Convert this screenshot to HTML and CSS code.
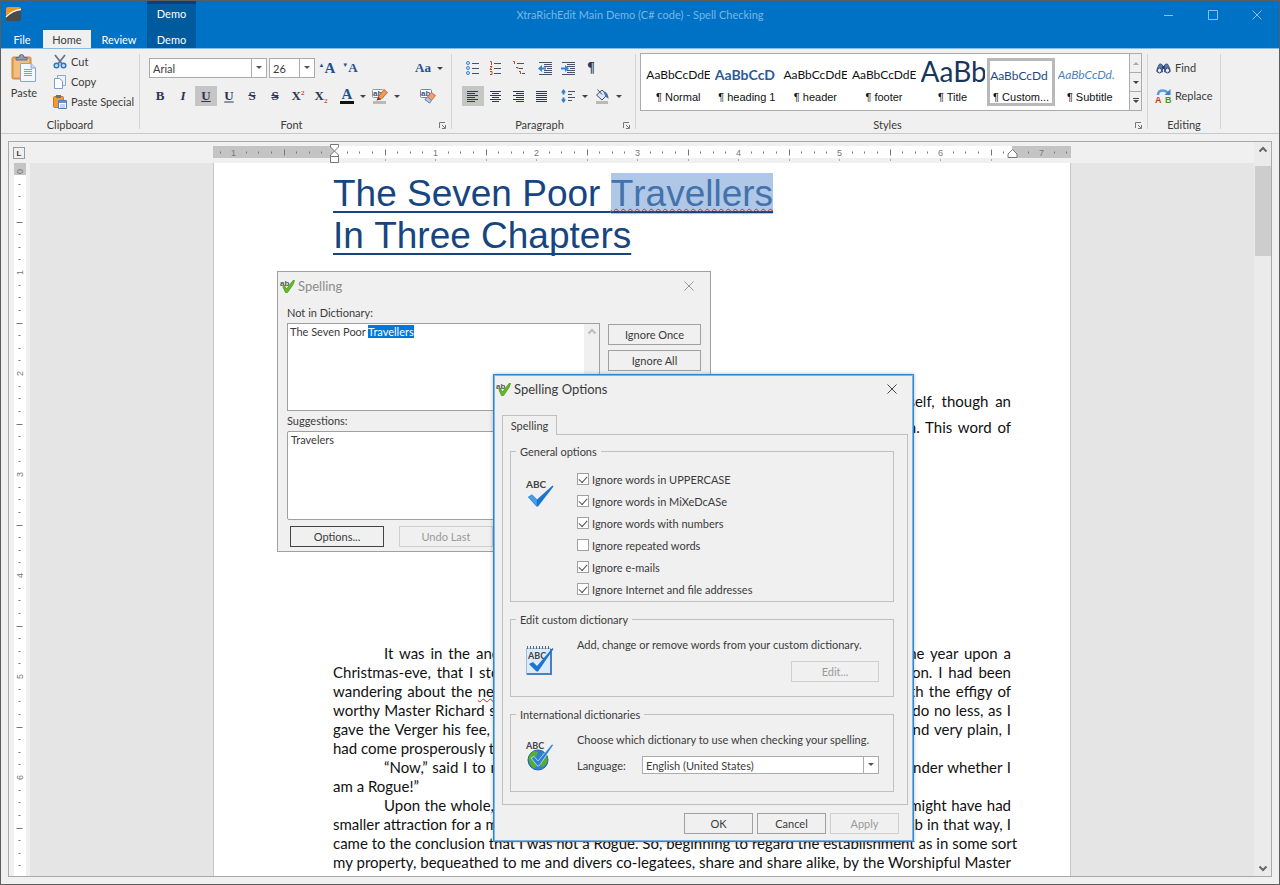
FILE: index.html
```html
<!doctype html>
<html lang="en">
<head>
    <meta charset="UTF-8">
    <meta name="viewport" content="width=device-width, initial-scale=1.0">
    <title>XtraRichEdit Main Demo (C# code) - Spell Checking</title>
    <link rel="stylesheet" href="styles.css">
</head>
<body>
<div class="app">
    <!--title bar-->
    <header class="header">
        <div class="titlebar">
            <div class="title-left">
                <svg class="logo" width="15" height="14" viewBox="0 0 15 14">
                    <rect width="15" height="14" rx="2" fill="#4a4a4a"/>
                    <path d="M0 9V2Q0 0 2 0H13Q15 0 15 2Q6 3 0 9Z" fill="#f7941e"/>
                    <path d="M0 10Q6 3.500 15 2.500" fill="none" stroke="#fff" stroke-width="1.300"/>
                </svg>
                <span class="context">Demo</span>
            </div>
            <h1 class="title">XtraRichEdit Main Demo (C# code) - Spell Checking</h1>
            <div class="win-btns">
                <button aria-label="Minimize"><svg width="10" height="10"><path d="M0 5.500H9"/></svg></button>
                <button aria-label="Maximize"><svg width="10" height="10"><path d="M.5.500H9.500V9.500H.5Z"/></svg></button>
                <button aria-label="Close"><svg width="10" height="10"><path d="M.5.500L9.500 9.500M9.500.500L.5 9.500"/></svg></button>
            </div>
        </div>
        <nav class="tabs">
            <a class="tab-file" href="#">File</a>
            <a class="tab-home on" href="#">Home</a>
            <a class="tab-review" href="#">Review</a>
            <a class="tab-demo" href="#">Demo</a>
        </nav>
    </header>

    <!--ribbon-->
    <div class="ribbon">
        <section class="group clipboard">
            <div class="group-body">
                <button class="paste">
                    <svg width="26" height="28" viewBox="0 0 26 28">
                        <rect x="1" y="3" width="19" height="22" rx="1.500" fill="#e8a55c" stroke="#c98341"/>
                        <path d="M3 5H18V23H3Z" fill="#f3bf80"/>
                        <path d="M5 6V3.500H8Q8 .5 10.500.5T13 3.500H16V6Z" fill="#8d9bb5" stroke="#5d6d8c"/>
                        <path d="M9.500 9.500H20L24.500 14V27.500H9.500Z" fill="#f4f8fe" stroke="#8ba3cc"/>
                        <path d="M20 9.500V14H24.500" fill="#cfdcf1" stroke="#8ba3cc"/>
                        <path d="M13 15.500H21M13 17.500H21M13 19.500H21M13 21.500H21" stroke="#7d9dd0"/>
                    </svg>
                    <span>Paste</span>
                </button>
                <div class="stack">
                    <button class="cmd">
                        <svg width="14" height="14" viewBox="0 0 14 14">
                            <path d="M2 0L9.500 9.500M12 0L4.500 9.500" stroke="#64748c" stroke-width="1.800"/>
                            <circle cx="3.500" cy="10.500" r="2.300" fill="#bfe0f8" stroke="#2f77be" stroke-width="1.500"/>
                            <circle cx="10.500" cy="10.500" r="2.300" fill="#bfe0f8" stroke="#2f77be" stroke-width="1.500"/>
                        </svg>Cut</button>
                    <button class="cmd">
                        <svg width="14" height="14" viewBox="0 0 14 14">
                            <path d="M4.500.5H12.500V10.500H4.500Z" fill="#eef4fd" stroke="#8fa8d0"/>
                            <path d="M1.500 3.500H6.500L9.500 6V13.500H1.500Z" fill="#fff" stroke="#7f9bc9"/>
                        </svg>Copy</button>
                    <button class="cmd">
                        <svg width="14" height="14" viewBox="0 0 14 14">
                            <rect x=".5" y="1.500" width="10" height="11" rx="1" fill="#f09a3e" stroke="#cc7526"/>
                            <rect x="3" y="0" width="5" height="3" fill="#63718b"/>
                            <path d="M5.500 5.500H13.500V13.500H5.500Z" fill="#fff" stroke="#4f7ec0"/>
                            <path d="M6 6H13V8H6Z" fill="#5d93d6"/>
                            <path d="M7 10H12M7 12H12" stroke="#8aabdb"/>
                        </svg>Paste Special</button>
                </div>
            </div>
            <h2>Clipboard</h2>
        </section>

        <section class="group font has-launch">
            <div class="group-body rows">
                <div class="row">
                    <span class="combo combo-font"><select aria-label="Font name"><option>Arial</option></select></span>
                    <span class="combo combo-size"><select aria-label="Font size"><option>26</option></select></span>
                    <button class="tool letter big" aria-label="Grow font"><sup>▲</sup>A</button>
                    <button class="tool letter shrink" aria-label="Shrink font"><sup>▼</sup>A</button>
                    <button class="tool letter blue push" aria-label="Change case">Aa</button><i class="drop"></i>
                </div>
                <div class="row">
                    <button class="tool letter">B</button>
                    <button class="tool letter italic">I</button>
                    <button class="tool letter under on">U</button>
                    <button class="tool letter double">U</button>
                    <button class="tool letter strike">S</button>
                    <button class="tool letter strike2">S</button>
                    <button class="tool letter">X<sup class="red">2</sup></button>
                    <button class="tool letter">X<sub class="red">2</sub></button>
                    <button class="tool letter color" aria-label="Font color">A</button><i class="drop"></i>
                    <button class="tool" aria-label="Highlight">
                        <svg width="16" height="15" viewBox="0 0 16 15">
                            <rect x=".5" y=".5" width="11" height="8" rx="1" fill="#fff" stroke="#8496ba"/>
                            <text class="ab" x="1" y="7">ab</text>
                            <path d="M6 8L12 0.500L15.500 3.500L9 10.500Z" fill="#ef9a52" stroke="#b85b24" stroke-width=".8"/>
                            <path d="M6 8L9 10.500L4.500 11.500Z" fill="#7a2f1c"/>
                            <rect x="1" y="12" width="13" height="3" fill="#b9b9b9"/>
                        </svg>
                    </button><i class="drop"></i>
                    <button class="tool push-sm" aria-label="Clear formatting">
                        <svg width="16" height="15" viewBox="0 0 16 15">
                            <rect x=".5" y=".5" width="11" height="8" rx="1" fill="#fff" stroke="#6d84b4"/>
                            <text class="ab" x="1" y="7">ab</text>
                            <path d="M5 10.500L11.500 3.500L15.500 6.500L9.500 14Z" fill="#ef9d6b" stroke="#c06030" stroke-width=".8"/>
                            <path d="M5 10.500L7.500 8L11.500 11.500L9.500 14Z" fill="#aecbf2" stroke="#5c80bd" stroke-width=".8"/>
                        </svg>
                    </button>
                </div>
            </div>
            <h2>Font</h2>
            <button class="launch" aria-label="Font settings"><svg width="7" height="7"><path d="M.5 6V.5H6M3 3L6 6M6.500 3V6.500H3"/></svg></button>
        </section>

        <section class="group paragraph has-launch">
            <div class="group-body rows">
                <div class="row">
                    <button class="tool" aria-label="Bullets">
                        <svg width="14" height="14" viewBox="0 0 14 14"><g fill="#cfe7fb" stroke="#3d85c8"><circle cx="2" cy="2" r="1.500"/><circle cx="2" cy="7" r="1.500"/><circle cx="2" cy="12" r="1.500"/></g><path d="M6 2.500H13M6 7.500H13M6 12.500H13" stroke="#44546e"/></svg>
                    </button>
                    <button class="tool" aria-label="Numbering">
                        <svg width="14" height="14" viewBox="0 0 14 14"><path d="M1 .5H2.500V4M1 5.500H3L1 8.500H3M1 10.500H3V13.500H1" fill="none" stroke="#c0492b"/><path d="M5 2.500H12M5 7.500H12M5 12.500H12" stroke="#44546e"/></svg>
                    </button>
                    <button class="tool" aria-label="Multilevel list">
                        <svg width="14" height="14" viewBox="0 0 14 14"><path d="M1 .5H2.500V3M4 6.500H6V8M7 10.500H8.500V13" fill="none" stroke="#c0492b"/><path d="M5 2.500H12M7 7.500H11M10 12.500H13" stroke="#44546e"/></svg>
                    </button>
                    <button class="tool gap" aria-label="Decrease indent">
                        <svg width="14" height="13" viewBox="0 0 14 13"><path d="M1 .5H14M6 2.500H14M6 4.500H14M9 6.500H14M6 8.500H14M6 10.500H14M1 12.500H14" stroke="#44546e"/><path d="M0 6.500L4 3V5.500H8V7.500H4V10Z" fill="#2f86d6"/></svg>
                    </button>
                    <button class="tool" aria-label="Increase indent">
                        <svg width="14" height="13" viewBox="0 0 14 13"><path d="M1 .5H14M6 2.500H14M6 4.500H14M9 6.500H14M6 8.500H14M6 10.500H14M1 12.500H14" stroke="#44546e"/><path d="M8 6.500L4 3V5.500H0V7.500H4V10Z" fill="#2f86d6"/></svg>
                    </button>
                    <button class="tool letter pilcrow" aria-label="Show marks">¶</button>
                </div>
                <div class="row">
                    <button class="tool on" aria-label="Align left"><svg width="12" height="11"><path d="M0 .5H11M0 2.500H8M0 4.500H11M0 6.500H8M0 8.500H11M0 10.500H8" stroke="#30394a"/></svg></button>
                    <button class="tool" aria-label="Center"><svg width="12" height="11"><path d="M0 .5H11M2 2.500H9M0 4.500H11M2 6.500H9M0 8.500H11M2 10.500H9" stroke="#30394a"/></svg></button>
                    <button class="tool" aria-label="Align right"><svg width="12" height="11"><path d="M0 .5H11M3 2.500H11M0 4.500H11M3 6.500H11M0 8.500H11M3 10.500H11" stroke="#30394a"/></svg></button>
                    <button class="tool" aria-label="Justify"><svg width="12" height="11"><path d="M0 .5H11M0 2.500H11M0 4.500H11M0 6.500H11M0 8.500H11M0 10.500H11" stroke="#30394a"/></svg></button>
                    <button class="tool gap" aria-label="Line spacing">
                        <svg width="14" height="14" viewBox="0 0 14 14"><path d="M2.500 0L5 3.500H3.500V5.500H1.500V3.500H0ZM2.500 14L5 10.500H3.500V8.500H1.500V10.500H0Z" fill="#2f78c4"/><path d="M7 2.500H14M7 5.500H11M7 8.500H14M7 11.500H11" stroke="#44546e"/></svg>
                    </button><i class="drop"></i>
                    <button class="tool" aria-label="Shading">
                        <svg width="15" height="15" viewBox="0 0 15 15"><path d="M1.500 6L7 1L12 6L7 11Z" fill="#dfe6f2" stroke="#42506a"/><path d="M2.500.5L7 5.500" stroke="#42506a"/><path d="M8 2Q13.500 3 13.500 10L10.500 7.500Z" fill="#3f6fb5"/><rect x="1" y="12" width="12" height="3" fill="#b9b9b9"/></svg>
                    </button><i class="drop"></i>
                </div>
            </div>
            <h2>Paragraph</h2>
            <button class="launch" aria-label="Paragraph settings"><svg width="7" height="7"><path d="M.5 6V.5H6M3 3L6 6M6.500 3V6.500H3"/></svg></button>
        </section>

        <section class="group styles has-launch">
            <div class="group-body">
                <div class="gallery">
                    <button class="style"><span class="sample">AaBbCcDdE</span><span>¶ Normal</span></button>
                    <button class="style"><span class="sample s-heading">AaBbCcD</span><span>¶ heading 1</span></button>
                    <button class="style"><span class="sample">AaBbCcDdE</span><span>¶ header</span></button>
                    <button class="style"><span class="sample">AaBbCcDdE</span><span>¶ footer</span></button>
                    <button class="style"><span class="sample s-title">AaBb</span><span>¶ Title</span></button>
                    <button class="style on"><span class="sample s-custom">AaBbCcDd</span><span>¶ Custom...</span></button>
                    <button class="style"><span class="sample s-subtitle">AaBbCcDd.</span><span>¶ Subtitle</span></button>
                </div>
                <div class="gallery-nav">
                    <button aria-label="Previous styles" disabled><i class="tri up"></i></button>
                    <button aria-label="Next styles"><i class="tri"></i></button>
                    <button aria-label="All styles"><i class="tri more"></i></button>
                </div>
            </div>
            <h2>Styles</h2>
            <button class="launch" aria-label="Style settings"><svg width="7" height="7"><path d="M.5 6V.5H6M3 3L6 6M6.500 3V6.500H3"/></svg></button>
        </section>

        <section class="group editing">
            <div class="group-body stack">
                <button class="cmd">
                    <svg width="15" height="11" viewBox="0 0 15 11">
                        <path d="M3.500 1Q5 .5 6.500 2V9H1Q0 7 3.500 1ZM11.500 1Q10 .5 8.500 2V9H14Q15 7 11.500 1Z" fill="#5d7cae" stroke="#2c4470" stroke-width=".8"/>
                        <ellipse cx="3.500" cy="7.500" rx="2" ry="2.500" fill="#e6effb" stroke="#2c4470"/>
                        <ellipse cx="11.500" cy="7.500" rx="2" ry="2.500" fill="#e6effb" stroke="#2c4470"/>
                        <rect x="6" y="3" width="3" height="3" fill="#2c4470"/>
                    </svg>Find</button>
                <button class="cmd">
                    <svg width="15" height="14" viewBox="0 0 15 14">
                        <path d="M2 6Q2 1.500 7 1.500Q10 1.500 11.500 3.500" fill="none" stroke="#5e9bd6" stroke-width="2.500"/>
                        <path d="M14.500 0V6H8.500Z" fill="#3c82c8"/>
                        <text x="-1" y="14" class="rep" fill="#c23a1a">A</text>
                        <text x="9" y="14" class="rep" fill="#4a9a1c">B</text>
                    </svg>Replace</button>
            </div>
            <h2>Editing</h2>
        </section>
    </div>

    <!--editor-->
    <main class="editor">
        <div class="corner"><button aria-label="Tab stop">L</button></div>
        <div class="hruler"><svg id="hruler" width="858" height="21"></svg></div>
        <div class="vruler"><svg id="vruler" width="12" height="714"></svg></div>
        <div class="view">
            <article class="page">
                <h3>The Seven Poor <mark>Travellers</mark><br>In Three Chapters</h3>
                <div class="intro">
                    <p>Strictly speaking, there were only six Poor Travellers; but being such a Traveller myself, though an</p>
                    <p>idle one, and being withal as poor as I hope to be, I brought the number up to seven. This word of</p>
                </div>
                <div class="story">
                    <p class="indent">It was in the ancient little city of Rochester in Kent, of all the good days in the year upon a</p>
                    <p>Christmas-eve, that I stood reading this inscription over the quaint old door in question. I had been</p>
                    <p>wandering about the <span class="typo">neighbouring</span> Cathedral, and seen the tomb of Richard Watts, with the effigy of</p>
                    <p>worthy Master Richard starting out of it like a ship’s figure-head; and I felt that I could do no less, as I</p>
                    <p>gave the Verger his fee, than inquire the way to Watts’s Charity. The way being short and very plain, I</p>
                    <p class="end">had come prosperously to the inscription and the quaint old door.</p>
                    <p class="indent">“Now,” said I to myself, as I looked at the door, “I know I am not a Proctor; I wonder whether I</p>
                    <p class="end">am a Rogue!”</p>
                    <p class="indent">Upon the whole, though Conscience produced two or three pretty faces which might have had</p>
                    <p>smaller attraction for a moral Goliath than they had had for me, who am but a Tom Thumb in that way, I</p>
                    <p>came to the conclusion that I was not a Rogue. So, beginning to regard the establishment as in some sort</p>
                    <p>my property, bequeathed to me and divers co-legatees, share and share alike, by the Worshipful Master</p>
                    <p class="end">Richard Watts, I stepped backward into the road to survey my inheritance.</p>
                </div>
            </article>
        </div>
        <div class="scroll">
            <svg width="8" height="5"><path d="M.5 4.500L4 1L7.500 4.500"/></svg>
            <div class="thumb"></div>
            <svg width="8" height="5"><path d="M.5.500L4 4L7.500.5"/></svg>
        </div>
    </main>

    <!--spelling dialog-->
    <div class="dialog spelling" role="dialog" aria-label="Spelling">
        <div class="caption">
            <svg width="14" height="14" viewBox="0 0 14 14"><use href="#spell"/></svg>
            <h2>Spelling</h2>
            <button class="close" aria-label="Close"><svg width="10" height="10"><path d="M.5.500L9.500 9.500M9.500.500L.5 9.500"/></svg></button>
        </div>
        <div class="spelling-body">
            <div class="fields">
                <label for="word">Not in Dictionary:</label>
                <div class="textbox">
                    <textarea id="word" spellcheck="false">The Seven Poor Travellers</textarea>
                    <div class="mini-scroll"><svg width="8" height="5"><path d="M.5 4.500L4 1L7.500 4.500"/></svg></div>
                </div>
                <label for="suggest">Suggestions:</label>
                <select id="suggest" size="6"><option>Travelers</option></select>
            </div>
            <div class="side">
                <button class="btn">Ignore Once</button>
                <button class="btn">Ignore All</button>
            </div>
        </div>
        <div class="spelling-foot">
            <button class="btn focus">Options...</button>
            <button class="btn" disabled>Undo Last</button>
        </div>
    </div>

    <!--options dialog-->
    <div class="dialog options" role="dialog" aria-label="Spelling Options">
        <div class="caption">
            <svg width="14" height="14" viewBox="0 0 14 14">
                <g id="spell">
                    <text x="-1" y="7" class="spell-ab">ab</text>
                    <path d="M3 6L5.500 10L12 1.500H13.500L12 5.500L6.500 13.500H4.500L2 8Z" fill="#62bb22" stroke="#4a9a12" stroke-width=".8"/>
                </g>
            </svg>
            <h2>Spelling Options</h2>
            <button class="close" aria-label="Close"><svg width="10" height="10"><path d="M.5.500L9.500 9.500M9.500.500L.5 9.500"/></svg></button>
        </div>
        <div class="tabstrip"><button role="tab">Spelling</button></div>
        <div class="panel">
            <fieldset class="general">
                <legend>General options</legend>
                <svg width="32" height="32" viewBox="0 0 32 32">
                    <text x="1" y="11" class="abc">ABC</text>
                    <path d="M3 20L7 17.500L12 22.500L27.500 8.500L28.500 9.500L13 29.500H11.500Z" fill="#1d74cf"/>
                    <path d="M3 20L7 17.500L12 22.500L11.500 29.500Z" fill="#4a9be6"/>
                </svg>
                <div class="checks">
                    <label><input type="checkbox" checked>Ignore words in UPPERCASE</label>
                    <label><input type="checkbox" checked>Ignore words in MiXeDcASe</label>
                    <label><input type="checkbox" checked>Ignore words with numbers</label>
                    <label><input type="checkbox">Ignore repeated words</label>
                    <label><input type="checkbox" checked>Ignore e-mails</label>
                    <label><input type="checkbox" checked>Ignore Internet and file addresses</label>
                </div>
            </fieldset>
            <fieldset class="custom">
                <legend>Edit custom dictionary</legend>
                <svg width="32" height="32" viewBox="0 0 32 32">
                    <rect x="1.500" y="3.500" width="24" height="26" fill="#dcebfb" stroke="#9dbce0"/>
                    <path d="M2 29H26V4" fill="none" stroke="#4d7fbc" stroke-width="2"/>
                    <path d="M2 2.500H25" stroke="#5b6676" stroke-width="3" stroke-dasharray="1 2"/>
                    <text x="3" y="14" class="abc small">ABC</text>
                    <path d="M4 19L8 17L12 21L27.500 3L28.500 4L13 26.500H11.500Z" fill="#1d74cf"/>
                </svg>
                <div class="fs-col">
                    <p>Add, change or remove words from your custom dictionary.</p>
                    <button class="btn" disabled>Edit...</button>
                </div>
            </fieldset>
            <fieldset class="intl">
                <legend>International dictionaries</legend>
                <svg width="32" height="32" viewBox="0 0 32 32">
                    <text x="1" y="9" class="abc small">ABC</text>
                    <circle cx="13" cy="20" r="10" fill="#2f7fd2" stroke="#2763a8"/>
                    <path d="M4 16Q8 9 13 12Q12 17 8 18Q8 22 12 23Q12 28 8 28Q3 23 4 16ZM17 13Q22 14 22.500 21Q20 27 16 27Q15 21 19 19Z" fill="#56b030"/>
                    <path d="M6 18L9 16.500L13 21L27 4L28.500 5L14 26H12.500Z" fill="#2a80da" stroke="#fff" stroke-width=".6"/>
                </svg>
                <div class="fs-col">
                    <p>Choose which dictionary to use when checking your spelling.</p>
                    <div class="lang">
                        <label for="lang">Language:</label>
                        <span class="combo"><select id="lang"><option>English (United States)</option></select></span>
                    </div>
                </div>
            </fieldset>
        </div>
        <div class="options-foot">
            <button class="btn">OK</button>
            <button class="btn">Cancel</button>
            <button class="btn" disabled>Apply</button>
        </div>
    </div>
</div>
<script>
    var INCH = 101; //pixels per inch

    //one mark of a ruler: a number, a half-inch tick or an eighth tick
    function mark(n, x, y, vertical){
        if(n % 8 === 0){
            var turn = vertical ? ' transform="rotate(-90 ' + x + ' ' + y + ')"' : '';
            return '<text x="' + x + '" y="' + (y + 3) + '"' + turn + '>' + Math.abs(n / 8) + '</text>';
        }
        var len = n % 4 === 0 ? 3 : 1;
        return vertical
            ? '<path d="M' + (x - len) + ' ' + y + 'H' + (x + len) + '"/>'
            : '<path d="M' + x + ' ' + (y - len) + 'V' + (y + len) + '"/>';
    }

    //horizontal ruler
    var h = '<rect class="out" y="4" width="858" height="12"/><rect class="in" x="121" y="4" width="678" height="12"/>';
    for(var i = -9; i <= 58; i++){
        var x = Math.round(121 + i * INCH / 8) + 0.5;
        if(i !== 0 && i !== 54){
            h += mark(i, x, 10.5, false);
        }
        if(i > 0 && i < 54 && i % 4 === 0){
            h += '<path class="pale" d="M' + x + ' 17V19"/>';
        }
    }
    h += '<path class="knob" d="M117.500 2.500H125.500V5L121.500 9L117.500 5ZM121.500 9L125.500 13V20.500H117.500V13ZM117.500 14.500H125.500"/>';
    h += '<path class="knob" d="M799.500 7.500L804 12V15.500H795V12Z"/>';
    document.getElementById('hruler').innerHTML = h;

    //vertical ruler
    var v = '<rect class="in" width="12" height="714"/><rect class="out" width="12" height="12"/>';
    for(var j = 0; j <= 55; j++){
        v += mark(j, 5.5, Math.round(8 + j * INCH / 8) + 0.5, true);
    }
    document.getElementById('vruler').innerHTML = v;

    //select the misspelled word
    var word = document.getElementById('word');
    word.focus();
    word.setSelectionRange(15, 25);
</script>
</body>
</html>
```
FILE: styles.css
```css
*{
    box-sizing: border-box;
    margin: 0;
    padding: 0;
}
body,button,select,textarea{
    font-family: Lato, "Open Sans", sans-serif;
    font-size: 11px;
    color: #3b3b3b;
}
button{
    background: none;
    border: none;
}
a{
    text-decoration: none;
}
h1,h2,h3{
    font-weight: 400;
}
svg{
    display: block;
    flex: none;
    overflow: visible;
}
.app{
    position: relative;
    height: 100vh;
    display: flex;
    flex-direction: column;
    background: #f0f0f0;
    border: 1px solid #5e5e5e;
    overflow: hidden;
}

/* title bar */
.header{
    background: #0072c6;
}
.titlebar{
    display: grid;
    grid-template-columns: 1fr auto 1fr;
    height: 29px;
}
.title-left{
    display: flex;
    align-items: flex-start;
}
.logo{
    margin: 6px 0 0 5px;
}
.context{
    width: 49px;
    height: 29px;
    margin-left: 126px;
    line-height: 20px;
    text-align: center;
    color: #fff;
    background: #005a9e;
    border-top: 3px solid #0f3f7a;
}
.title{
    font-size: 11px;
    line-height: 28px;
    color: #7ab6e5;
}
.win-btns{
    display: flex;
    justify-content: flex-end;
    height: 28px;
}
.win-btns button{
    width: 44px;
    display: flex;
    align-items: center;
    justify-content: center;
}
.win-btns svg,.close svg{
    fill: none;
    stroke: #8cc0ea;
}
.tabs{
    display: flex;
}
.tabs a{
    height: 18px;
    line-height: 20px;
    text-align: center;
    color: #fff;
}
.tab-file{
    width: 42px;
}
.tab-home{
    width: 48px;
}
.tab-review{
    width: 56px;
}
.tab-demo{
    width: 49px;
    background: #005a9e;
}
.tabs .on{
    background: #f0f0f0;
    color: #3b3b3b;
}

/* ribbon */
.ribbon{
    display: flex;
    height: 86px;
    padding-top: 5px;
    border-top: 1px solid #8abbe2;
    border-bottom: 1px solid #c9c9c9;
}
.group{
    position: relative;
    display: flex;
    flex-direction: column;
    height: 75px;
    border-right: 1px solid #d4d4d4;
}
.group h2{
    flex: none;
    font-size: 11px;
    line-height: 14px;
    text-align: center;
}
.has-launch h2{
    padding-right: 8px;
}
.group-body{
    display: flex;
    flex: none;
    height: 64px;
}
.launch{
    position: absolute;
    right: 5px;
    bottom: 0;
}
.launch svg{
    fill: none;
    stroke: #777;
}
.clipboard{
    width: 139px;
}
.paste{
    display: flex;
    flex-direction: column;
    align-items: center;
    gap: 4px;
    width: 46px;
    height: 48px;
}
.stack{
    display: flex;
    flex-direction: column;
}
.cmd{
    display: flex;
    align-items: center;
    gap: 4px;
    height: 20px;
    padding-left: 6px;
    line-height: 16px;
}
.clipboard .stack{
    margin-top: -2px;
}
.font{
    width: 312px;
}
.paragraph{
    width: 184px;
}
.styles{
    width: 512px;
}
.editing{
    width: 73px;
}
.editing .stack{
    gap: 8px;
    padding: 4px 0 0 2px;
}
.rows{
    flex-direction: column;
    gap: 8px;
    padding: 4px 0 0 9px;
}
.row{
    display: flex;
    align-items: center;
    gap: 1px;
    height: 20px;
}
.combo{
    position: relative;
    display: block;
    height: 20px;
}
.combo select{
    width: 100%;
    height: 100%;
    padding: 0 3px;
    appearance: none;
    border: 1px solid #ababab;
    background: #fff;
}
.combo:before{
    content: "";
    position: absolute;
    top: 1px;
    right: 1px;
    bottom: 1px;
    width: 14px;
    border-left: 1px solid #ababab;
    background: #fff;
    pointer-events: none;
}
.combo:after{
    content: "";
    position: absolute;
    top: 8px;
    right: 5px;
    border: 3px solid transparent;
    border-top-color: #555;
    border-bottom: none;
    pointer-events: none;
}
.combo-font{
    width: 118px;
    margin-right: 1px;
}
.combo-size{
    width: 46px;
}
.tool{
    display: flex;
    align-items: center;
    justify-content: center;
    width: 22px;
    height: 20px;
}
.tool.on{
    background: #c5c5c5;
}
.drop{
    width: 10px;
    display: flex;
    justify-content: center;
}
.drop:before,.tri{
    content: "";
    border: 3px solid transparent;
    border-top-color: #444;
    border-bottom: none;
}
.letter{
    font-family: "Liberation Serif", serif;
    font-size: 13px;
    font-weight: 700;
    line-height: 16px;
    color: #2a3654;
}
.letter sup,.letter sub{
    font-size: 6px;
    line-height: 6px;
}
.letter sup{
    align-self: flex-start;
    margin-top: 4px;
}
.letter sub{
    align-self: flex-end;
    margin-bottom: 2px;
}
.letter .red{
    font-size: 7px;
    color: #c8431f;
}
.big,.color{
    font-size: 15px;
    color: #24508f;
}
.blue,.shrink{
    color: #24508f;
}
.italic{
    font-style: italic;
}
.under{
    text-decoration: underline;
}
.double{
    text-decoration: underline;
    text-decoration-thickness: 2px;
    text-decoration-color: #8a93a6;
}
.strike{
    text-decoration: line-through;
}
.strike2{
    text-decoration: line-through double;
}
.color{
    height: 16px;
    line-height: 13px;
    border-bottom: 3px solid #111;
    width: 14px;
    margin: 0 3px 0 7px;
}
.pilcrow{
    font-size: 14px;
}
.push{
    margin-left: 50px;
}
.push-sm{
    margin-left: 14px;
}
.gap{
    margin-left: 3px;
}
.ab{
    font: 700 8px "Liberation Sans", sans-serif;
    fill: #3c4f78;
}
.rep{
    font: 700 9px "Liberation Sans", sans-serif;
}

/* style gallery */
.styles .group-body{
    padding-left: 4px;
}
.paragraph .rows{
    padding-left: 10px;
}
.gallery{
    display: grid;
    grid-template-columns: repeat(7, 1fr);
    width: 490px;
    height: 58px;
    margin-top: -1px;
    padding: 4px 5px 4px 3px;
    background: #fff;
    border: 1px solid #ababab;
}
.style{
    display: flex;
    flex-direction: column;
    align-items: center;
    justify-content: space-between;
    padding: 0 2px 3px;
    overflow: hidden;
    white-space: nowrap;
    font-family: "Liberation Sans", sans-serif;
    color: #111;
}
.style.on{
    border: 3px solid #b9b9b9;
    padding: 0;
}
.sample{
    width: 64px;
    height: 34px;
    overflow: hidden;
    text-align: left;
    font: 12px/34px Lato, sans-serif;
}
.s-heading{
    font-size: 14px;
    font-weight: 700;
    color: #2b5a9a;
}
.s-title{
    font-size: 28px;
    line-height: 26px;
    color: #17365d;
}
.s-custom{
    width: 62px;
    height: 30px;
    line-height: 30px;
    color: #1f497d;
}
.s-subtitle{
    font-style: italic;
    color: #4f81bd;
}
.gallery-nav{
    display: flex;
    flex-direction: column;
    width: 12px;
    height: 58px;
    margin-top: -1px;
}
.gallery-nav button{
    flex: 1;
    display: flex;
    align-items: center;
    justify-content: center;
    border: 1px solid #ababab;
    border-left: none;
    margin-bottom: -1px;
}
.gallery-nav button:last-child{
    margin-bottom: 0;
}
.up{
    transform: scaleY(-1);
    opacity: .4;
}
.more{
    position: relative;
}
.more:before{
    content: "";
    position: absolute;
    left: -3px;
    top: -5px;
    width: 6px;
    height: 1px;
    background: #444;
}

/* editor */
.editor{
    flex: 1;
    min-height: 0;
    margin: 7px;
    display: grid;
    grid-template-columns: 21px 1fr 17px;
    grid-template-rows: 21px 1fr;
    border: 1px solid #a9a9a9;
}
.corner{
    padding: 5px 0 0 4px;
}
.corner button{
    display: block;
    width: 12px;
    height: 12px;
    border: 1px solid #999;
    font: 700 8px/9px "Liberation Sans", sans-serif;
}
.hruler{
    display: flex;
    justify-content: center;
}
.vruler{
    padding-left: 5px;
    overflow: hidden;
}
.hruler text,.vruler text{
    font: 9px "Liberation Sans", sans-serif;
    text-anchor: middle;
    fill: #777;
}
.hruler path,.vruler path{
    stroke: #777;
}
.hruler .pale{
    stroke: #aaa;
}
.hruler .knob{
    fill: #fff;
}
.out{
    fill: #c4c4c4;
}
.in{
    fill: #fff;
}
.view{
    grid-row: 2;
    grid-column: 2;
    display: flex;
    justify-content: center;
    background: #e5e5e5;
    overflow: hidden;
}
.page{
    width: 858px;
    padding: 10px 59px 0 119px;
    background: #fff;
    border-left: 1px solid #c8c8c8;
    border-right: 1px solid #c8c8c8;
}
.page h3{
    font: 37px/42px "Liberation Sans", sans-serif;
    font-kerning: none;
    color: #17457f;
    text-decoration: underline;
    text-decoration-thickness: 2px;
    text-underline-offset: 5px;
    text-decoration-skip-ink: none;
}
.page mark{
    background: #b0c8e8;
    color: #4472ab;
    text-decoration: underline wavy #e02020 1px;
    text-decoration-skip-ink: none;
    text-underline-offset: 2px;
}
.page p{
    font-family: Lato, sans-serif;
    font-size: 15px;
    color: #111;
    white-space: nowrap;
    text-align-last: justify;
}
.intro{
    margin-top: 131px;
    line-height: 26px;
}
.story{
    margin-top: 204px;
    line-height: 19px;
}
.page .indent{
    margin-left: 51px;
}
.page .end{
    text-align-last: left;
}
.typo{
    text-decoration: underline wavy #e02020 1px;
    text-decoration-skip-ink: none;
}
.scroll{
    grid-row: 1 / 3;
    grid-column: 3;
    display: flex;
    flex-direction: column;
    align-items: center;
    padding: 5px 0;
    background: #ebebeb;
}
.scroll svg,.mini-scroll svg{
    fill: none;
    stroke: #666;
    stroke-width: 2;
}
.thumb{
    width: 16px;
    height: 90px;
    margin: 14px 0 auto;
    background: #cdcdcd;
}

/* dialogs */
.dialog{
    position: absolute;
    background: #f0f0f0;
    border: 1px solid #a0a0a0;
}
.caption{
    display: flex;
    align-items: center;
    gap: 3px;
    height: 27px;
    padding: 0 16px 0 3px;
}
.caption h2{
    flex: 1;
    font-size: 13px;
}
.close svg{
    stroke: #444;
}
.spell-ab{
    font: 700 8px "Liberation Sans", sans-serif;
    fill: #555;
}
.abc{
    font: 700 10px Lato, sans-serif;
    fill: #444;
}
.small{
    font-size: 9px;
}
.btn{
    height: 21px;
    border: 1px solid #a0a0a0;
    background: #f0f0f0;
    text-align: center;
}
.btn:disabled{
    color: #9a9a9a;
    border-color: #cfcfcf;
}
.btn.focus{
    border-color: #444;
}
.spelling{
    left: 276px;
    top: 270px;
    width: 434px;
    height: 281px;
}
.spelling .caption h2{
    color: #8c8c8c;
}
.spelling .close svg{
    stroke: #999;
}
.spelling-body{
    display: flex;
    gap: 8px;
    padding: 7px 9px 0;
}
.fields{
    display: flex;
    flex-direction: column;
    width: 313px;
}
.fields label{
    height: 17px;
    line-height: 14px;
}
.textbox{
    display: flex;
    height: 88px;
    margin-bottom: 3px;
    border: 1px solid #a0a0a0;
    background: #fff;
}
.textbox textarea{
    flex: 1;
    padding: 1px 2px;
    line-height: 13px;
    border: none;
    outline: none;
    resize: none;
    overflow: hidden;
}
.textbox ::selection{
    background: #0078d7;
    color: #fff;
}
.mini-scroll{
    width: 15px;
    padding: 5px 4px;
    background: #f0f0f0;
}
.mini-scroll svg{
    stroke: #bbb;
}
#suggest{
    height: 89px;
    padding: 1px 0;
    appearance: none;
    border: 1px solid #a0a0a0;
    background: #fff;
    overflow: hidden;
}
#suggest option{
    padding: 0 3px;
    min-height: 13px;
    line-height: 13px;
}
.side{
    display: flex;
    flex-direction: column;
    gap: 5px;
    width: 93px;
    padding-top: 18px;
}
.spelling-foot{
    display: flex;
    gap: 15px;
    padding: 6px 12px;
}
.spelling-foot .btn{
    width: 94px;
}

.options{
    left: 492px;
    top: 373px;
    width: 421px;
    height: 468px;
    border: 1px solid #2b88d4;
    outline: 1px solid #7cb4e2;
    outline-offset: -2px;
    box-shadow: 0 0 4px rgba(0,0,0,.25);
}
.tabstrip{
    padding: 13px 0 0 8px;
}
.tabstrip button{
    display: block;
    position: relative;
    width: 55px;
    height: 20px;
    margin-bottom: -1px;
    border: 1px solid #c0c0c0;
    border-bottom: none;
    background: #f0f0f0;
}
.panel{
    height: 371px;
    margin: 0 5px 0 8px;
    padding: 9px 13px 0 7px;
    border: 1px solid #c0c0c0;
}
fieldset{
    display: flex;
    gap: 20px;
    padding: 0 14px;
    border: 1px solid #c0c0c0;
}
legend{
    margin-left: -9px;
    padding: 0 4px;
    line-height: 15px;
}
.general{
    height: 158px;
}
fieldset > svg{
    margin-top: 18px;
}
.custom,.intl{
    height: 85px;
    margin-top: 10px;
}
.checks{
    display: flex;
    flex-direction: column;
    gap: 4px;
    padding-top: 11px;
}
.checks label{
    display: flex;
    align-items: center;
    gap: 3px;
    height: 18px;
}
.checks input{
    appearance: none;
    display: flex;
    justify-content: center;
    width: 12px;
    height: 12px;
    border: 1px solid #a0a0a0;
    background: #fff;
}
.checks input:checked:before{
    content: "";
    width: 7px;
    height: 4px;
    margin-top: 2px;
    border: solid #555;
    border-width: 0 0 1px 1px;
    transform: rotate(-48deg);
}
.fs-col{
    flex: 1;
    display: flex;
    flex-direction: column;
    gap: 9px;
    padding-top: 10px;
}
.fs-col p{
    line-height: 15px;
}
.fs-col .btn{
    width: 88px;
    align-self: flex-end;
}
.lang{
    display: flex;
    justify-content: space-between;
    align-items: center;
}
.lang .combo{
    width: 237px;
    height: 18px;
}
.lang .combo:after{
    top: 7px;
}
.options-foot{
    display: flex;
    justify-content: flex-end;
    gap: 4px;
    padding: 8px 14px;
}
.options-foot .btn{
    width: 69px;
}
```
